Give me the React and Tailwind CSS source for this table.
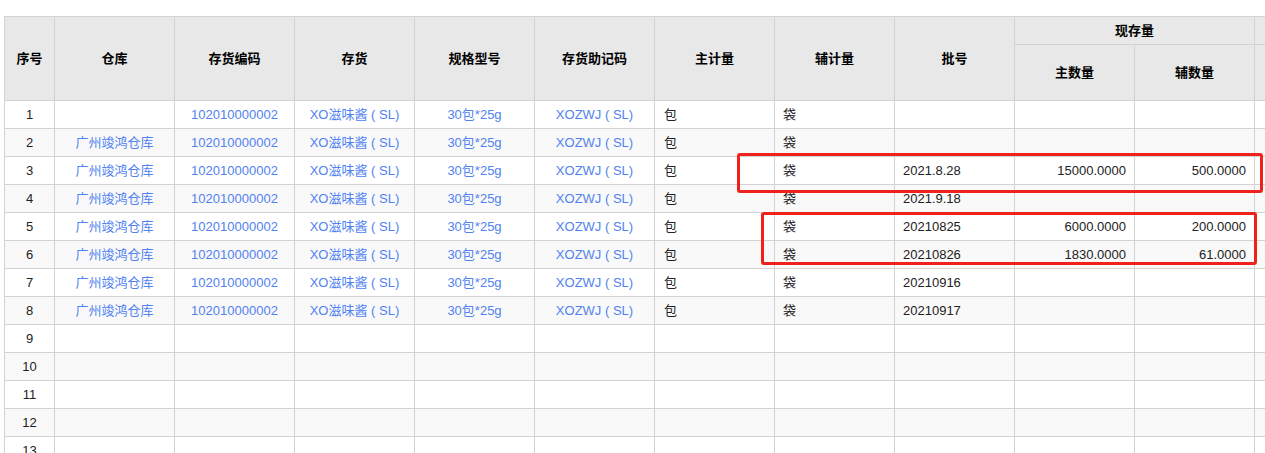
const WAREHOUSE = '广州竣鸿仓库';

const rows = [
  { wh: '', batch: '', main: '', sub: '' },
  { wh: WAREHOUSE, batch: '', main: '', sub: '' },
  { wh: WAREHOUSE, batch: '2021.8.28', main: '15000.0000', sub: '500.0000' },
  { wh: WAREHOUSE, batch: '2021.9.18', main: '', sub: '' },
  { wh: WAREHOUSE, batch: '20210825', main: '6000.0000', sub: '200.0000' },
  { wh: WAREHOUSE, batch: '20210826', main: '1830.0000', sub: '61.0000' },
  { wh: WAREHOUSE, batch: '20210916', main: '', sub: '' },
  { wh: WAREHOUSE, batch: '20210917', main: '', sub: '' },
];

const EMPTY_ROWS = [9, 10, 11, 12, 13];

const cell = 'border border-[#d3d3d3] h-[28px] p-0 overflow-hidden whitespace-nowrap';
const th = 'border border-[#d3d3d3] bg-[#e8e8e8] font-bold text-black text-[13px] p-0';
const link = 'text-[#5082f2]';

export default function App() {
  return (
    <div
      className="relative w-[1265px] h-[453px] overflow-hidden bg-white"
      style={{ fontFamily: '"Liberation Sans", Arial, "Noto Sans CJK SC", sans-serif' }}
    >
      <div className="pt-4 pl-1">
        <table className="table-fixed border-collapse w-[1490px] text-[13px] text-[#222]">
          <colgroup>
            <col className="w-[50px]" />
            {Array.from({ length: 12 }).map((_, i) => (
              <col key={i} className="w-[120px]" />
            ))}
          </colgroup>
          <thead>
            <tr className="h-[28px]">
              <th rowSpan={2} className={th}>序号</th>
              <th rowSpan={2} className={th}>仓库</th>
              <th rowSpan={2} className={th}>存货编码</th>
              <th rowSpan={2} className={th}>存货</th>
              <th rowSpan={2} className={th}>规格型号</th>
              <th rowSpan={2} className={th}>存货助记码</th>
              <th rowSpan={2} className={th}>主计量</th>
              <th rowSpan={2} className={th}>辅计量</th>
              <th rowSpan={2} className={th}>批号</th>
              <th colSpan={2} className={th}>现存量</th>
              <th colSpan={2} className={th}></th>
            </tr>
            <tr className="h-[56px]">
              <th className={th}>主数量</th>
              <th className={th}>辅数量</th>
              <th className={th}></th>
              <th className={th}></th>
            </tr>
          </thead>
          <tbody>
            {rows.map((r, i) => (
              <tr key={i} className={i % 2 === 1 ? 'bg-[#f9f9f9]' : 'bg-white'}>
                <td className={`${cell} text-center`}>{i + 1}</td>
                <td className={`${cell} text-center ${link}`}>{r.wh}</td>
                <td className={`${cell} text-center ${link}`}>102010000002</td>
                <td className={`${cell} text-center ${link}`}>XO滋味酱 ( SL)</td>
                <td className={`${cell} text-center ${link}`}>30包*25g</td>
                <td className={`${cell} text-center ${link}`}>XOZWJ ( SL)</td>
                <td className={`${cell} pl-[9px]`}>包</td>
                <td className={`${cell} pl-[8px]`}>袋</td>
                <td className={`${cell} pl-[8px]`}>{r.batch}</td>
                <td className={`${cell} text-right pr-[8px]`}>{r.main}</td>
                <td className={`${cell} text-right pr-[8px]`}>{r.sub}</td>
                <td className={cell}></td>
                <td className={cell}></td>
              </tr>
            ))}
            {EMPTY_ROWS.map((n) => (
              <tr key={n} className={n % 2 === 0 ? 'bg-[#f9f9f9]' : 'bg-white'}>
                <td className={`${cell} text-center`}>{n}</td>
                {Array.from({ length: 12 }).map((_, j) => (
                  <td key={j} className={cell}></td>
                ))}
              </tr>
            ))}
          </tbody>
        </table>
      </div>

      {/* red annotation boxes */}
      <div className="absolute left-[737px] top-[153px] w-[526px] h-[40px] border-[3px] border-[#f0201a] rounded-[3px]" />
      <div className="absolute left-[761px] top-[212px] w-[496px] h-[53px] border-[3px] border-[#f0201a] rounded-[3px]" />
    </div>
  );
}
